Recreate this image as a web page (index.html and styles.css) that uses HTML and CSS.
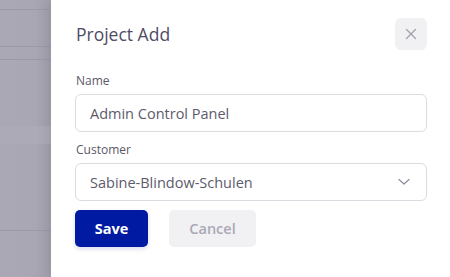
FILE: index.html
```html
<!DOCTYPE html>
<html lang="en">
<head>
    <meta charset="UTF-8">
    <meta name="viewport" content="width=device-width, initial-scale=1.0">
    <title>Project Add</title>
    <link rel="stylesheet" href="styles.css">
</head>
<body>

    <!-- Dimmed page behind the drawer -->
    <div class="backdrop">
        <div class="row-line l1"></div>
        <div class="row-line l2"></div>
        <div class="row-line l3"></div>
        <div class="row-band"></div>
        <div class="row-line l4"></div>
    </div>

    <!-- Drawer -->
    <div class="drawer">
        <div class="drawer-head">
            <h2 class="drawer-title">Project Add</h2>
            <button class="close-btn" aria-label="Close">
                <svg width="12" height="12" viewBox="0 0 12 12">
                    <path d="M1.5 1.5 L10.5 10.5 M10.5 1.5 L1.5 10.5" stroke="#a3a1ad" stroke-width="1.3" stroke-linecap="round" fill="none"/>
                </svg>
            </button>
        </div>

        <div class="field">
            <label class="field-label">Name</label>
            <div class="input">Admin Control Panel</div>
        </div>

        <div class="field">
            <label class="field-label">Customer</label>
            <div class="input select">
                <span>Sabine-Blindow-Schulen</span>
                <svg width="12" height="8" viewBox="0 0 12 8">
                    <path d="M1 1.5 L6 6 L11 1.5" stroke="#8f8d9a" stroke-width="1.2" stroke-linecap="round" stroke-linejoin="round" fill="none"/>
                </svg>
            </div>
        </div>

        <div class="actions">
            <button class="btn btn-save">Save</button>
            <button class="btn btn-cancel">Cancel</button>
        </div>
    </div>

</body>
</html>
```

FILE: styles.css
```css
* {
    margin: 0;
    padding: 0;
    box-sizing: border-box;
    font-family: "Open Sans", "Noto Sans", sans-serif;
}

body {
    width: 450px;
    height: 277px;
    display: flex;
    overflow: hidden;
    background: #fff;
}

/* Dimmed background page */
.backdrop {
    width: 51px;
    flex-shrink: 0;
    background: linear-gradient(to right, #aaa8b4 0%, #a9a7b3 65%, #a3a1ad 100%);
    display: flex;
    flex-direction: column;
}

.row-line {
    height: 1px;
    background: #9c9aa7;
}

.l1 { margin-top: 9px; }
.l2 { margin-top: 36px; }
.l3 { margin-top: 12px; }

.row-band {
    margin-top: 66px;
    height: 18px;
    background: #acaab6;
}

.l4 { margin-top: 86px; }

/* Drawer panel */
.drawer {
    flex: 1;
    padding: 18px 23px 0 24px;
    box-shadow: -4px 0 10px rgba(60, 56, 80, 0.12);
}

.drawer-head {
    display: flex;
    justify-content: space-between;
    align-items: center;
    height: 32px;
    margin-bottom: 23px;
}

.drawer-title {
    font-size: 17.5px;
    font-weight: 500;
    color: #4f4c65;
    padding-left: 1px;
}

.close-btn {
    width: 32px;
    height: 32px;
    border: none;
    border-radius: 6px;
    background: #f1f1f3;
    display: flex;
    align-items: center;
    justify-content: center;
}

.field {
    margin-bottom: 10px;
}

.field-label {
    display: block;
    font-size: 12px;
    color: #5a5868;
    line-height: 16px;
    margin-bottom: 5px;
    padding-left: 1px;
}

.input {
    height: 38px;
    border: 1px solid #dcdbe1;
    border-radius: 6px;
    padding: 0 14px;
    display: flex;
    align-items: center;
    font-size: 14.5px;
    color: #5d5a6c;
}

.select {
    justify-content: space-between;
    padding-right: 16px;
}

.actions {
    display: flex;
    gap: 21px;
    margin-top: -1px;
}

.btn {
    height: 37px;
    border: none;
    border-radius: 5px;
    font-size: 14.5px;
    font-weight: 600;
}

.btn-save {
    width: 73px;
    background: #001aa1;
    color: #fff;
    font-weight: 700;
    box-shadow: 0 2px 4px rgba(0, 20, 120, 0.15);
}

.btn-cancel {
    width: 87px;
    background: #f1f1f3;
    color: #aaa8b5;
}
```
